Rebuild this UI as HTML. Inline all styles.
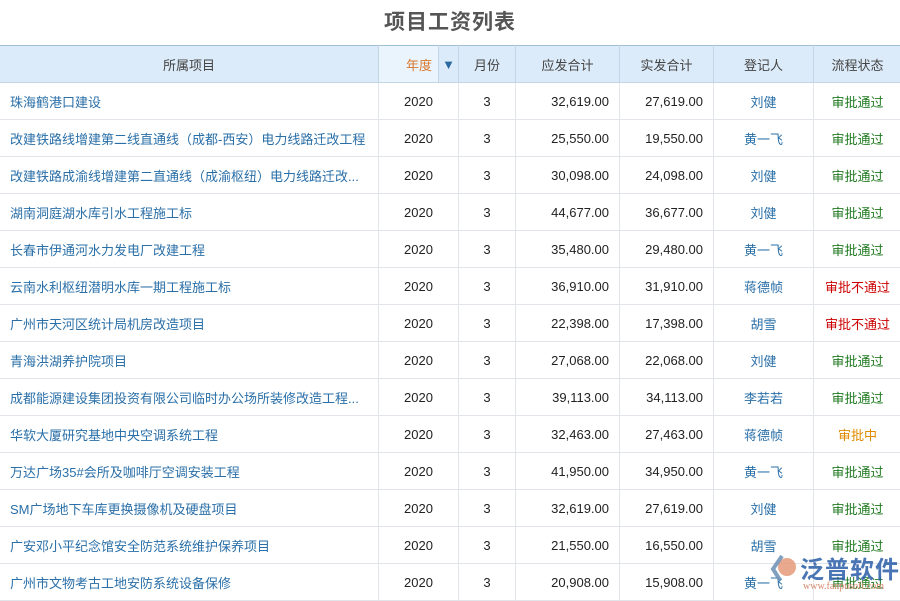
<!DOCTYPE html>
<html><head><meta charset="utf-8"><style>
body{margin:0;width:900px;height:600px;overflow:hidden;background:#fff;font-family:"Liberation Sans","Noto Sans CJK SC",sans-serif;position:relative}
h1{position:absolute;top:6px;left:0;width:900px;text-align:center;margin:0;font-size:21px;font-weight:bold;color:#555;letter-spacing:1px}
table{position:absolute;top:45px;left:-1px;border-collapse:collapse;table-layout:fixed;width:902px}
th{height:36px;background:#dcebf9;color:#444;font-weight:normal;font-size:13px;border:1px solid #c3d6e6;border-top:1px solid #9fbfd6;padding:0}
td{height:36px;font-size:13px;color:#222;border:1px solid #e1e5ea;padding:0;text-align:center;white-space:nowrap;overflow:hidden}
td.p{text-align:left;padding-left:10px;color:#2a6fa8;text-overflow:ellipsis}
td.n{text-align:right;padding-right:10px}
td.u{color:#2a6fa8}
.g{color:#1f7a1f}.r{color:#c00}.o{color:#e08a00}
th.y{background:#eaf4fd;color:#d9782d;text-align:right;padding-right:6px}
.logo{position:absolute;left:800px;top:550px;color:#2a5ea8;font-size:24px;font-weight:bold;letter-spacing:1px;opacity:.85;white-space:nowrap}
.url{position:absolute;left:803px;top:581px;color:#d58a70;font-size:10px;font-family:"Liberation Serif",serif;white-space:nowrap}
</style></head><body>
<h1>项目工资列表</h1>
<table>
<colgroup><col style="width:379px"><col style="width:60px"><col style="width:20px"><col style="width:57px"><col style="width:104px"><col style="width:94px"><col style="width:100px"><col style="width:88px"></colgroup>
<tr><th>所属项目</th><th class="y">年度</th><th style="background:#dcebf9;color:#2a6aa0;font-size:13px">▼</th><th>月份</th><th>应发合计</th><th>实发合计</th><th>登记人</th><th>流程状态</th></tr>
<tr><td class="p">珠海鹤港口建设</td><td colspan="2">2020</td><td>3</td><td class="n">32,619.00</td><td class="n">27,619.00</td><td class="u">刘健</td><td class="g">审批通过</td></tr>
<tr><td class="p">改建铁路线增建第二线直通线（成都-西安）电力线路迁改工程</td><td colspan="2">2020</td><td>3</td><td class="n">25,550.00</td><td class="n">19,550.00</td><td class="u">黄一飞</td><td class="g">审批通过</td></tr>
<tr><td class="p">改建铁路成渝线增建第二直通线（成渝枢纽）电力线路迁改...</td><td colspan="2">2020</td><td>3</td><td class="n">30,098.00</td><td class="n">24,098.00</td><td class="u">刘健</td><td class="g">审批通过</td></tr>
<tr><td class="p">湖南洞庭湖水库引水工程施工标</td><td colspan="2">2020</td><td>3</td><td class="n">44,677.00</td><td class="n">36,677.00</td><td class="u">刘健</td><td class="g">审批通过</td></tr>
<tr><td class="p">长春市伊通河水力发电厂改建工程</td><td colspan="2">2020</td><td>3</td><td class="n">35,480.00</td><td class="n">29,480.00</td><td class="u">黄一飞</td><td class="g">审批通过</td></tr>
<tr><td class="p">云南水利枢纽潜明水库一期工程施工标</td><td colspan="2">2020</td><td>3</td><td class="n">36,910.00</td><td class="n">31,910.00</td><td class="u">蒋德帧</td><td class="r">审批不通过</td></tr>
<tr><td class="p">广州市天河区统计局机房改造项目</td><td colspan="2">2020</td><td>3</td><td class="n">22,398.00</td><td class="n">17,398.00</td><td class="u">胡雪</td><td class="r">审批不通过</td></tr>
<tr><td class="p">青海洪湖养护院项目</td><td colspan="2">2020</td><td>3</td><td class="n">27,068.00</td><td class="n">22,068.00</td><td class="u">刘健</td><td class="g">审批通过</td></tr>
<tr><td class="p">成都能源建设集团投资有限公司临时办公场所装修改造工程...</td><td colspan="2">2020</td><td>3</td><td class="n">39,113.00</td><td class="n">34,113.00</td><td class="u">李若若</td><td class="g">审批通过</td></tr>
<tr><td class="p">华软大厦研究基地中央空调系统工程</td><td colspan="2">2020</td><td>3</td><td class="n">32,463.00</td><td class="n">27,463.00</td><td class="u">蒋德帧</td><td class="o">审批中</td></tr>
<tr><td class="p">万达广场35#会所及咖啡厅空调安装工程</td><td colspan="2">2020</td><td>3</td><td class="n">41,950.00</td><td class="n">34,950.00</td><td class="u">黄一飞</td><td class="g">审批通过</td></tr>
<tr><td class="p">SM广场地下车库更换摄像机及硬盘项目</td><td colspan="2">2020</td><td>3</td><td class="n">32,619.00</td><td class="n">27,619.00</td><td class="u">刘健</td><td class="g">审批通过</td></tr>
<tr><td class="p">广安邓小平纪念馆安全防范系统维护保养项目</td><td colspan="2">2020</td><td>3</td><td class="n">21,550.00</td><td class="n">16,550.00</td><td class="u">胡雪</td><td class="g">审批通过</td></tr>
<tr><td class="p">广州市文物考古工地安防系统设备保修</td><td colspan="2">2020</td><td>3</td><td class="n">20,908.00</td><td class="n">15,908.00</td><td class="u">黄一飞</td><td class="g">审批通过</td></tr>
</table>
<svg style="position:absolute;left:770px;top:553px" width="30" height="30" viewBox="0 0 30 30"><circle cx="17" cy="14" r="9" fill="#e59a7a" opacity=".85"/><path d="M12 3 L3 16 L10 27" stroke="#6b8fb5" stroke-width="4" fill="none" opacity=".85"/></svg>
<div class="logo">泛普软件</div>
<div class="url">www.fanpusoft.com</div>
</body></html>
